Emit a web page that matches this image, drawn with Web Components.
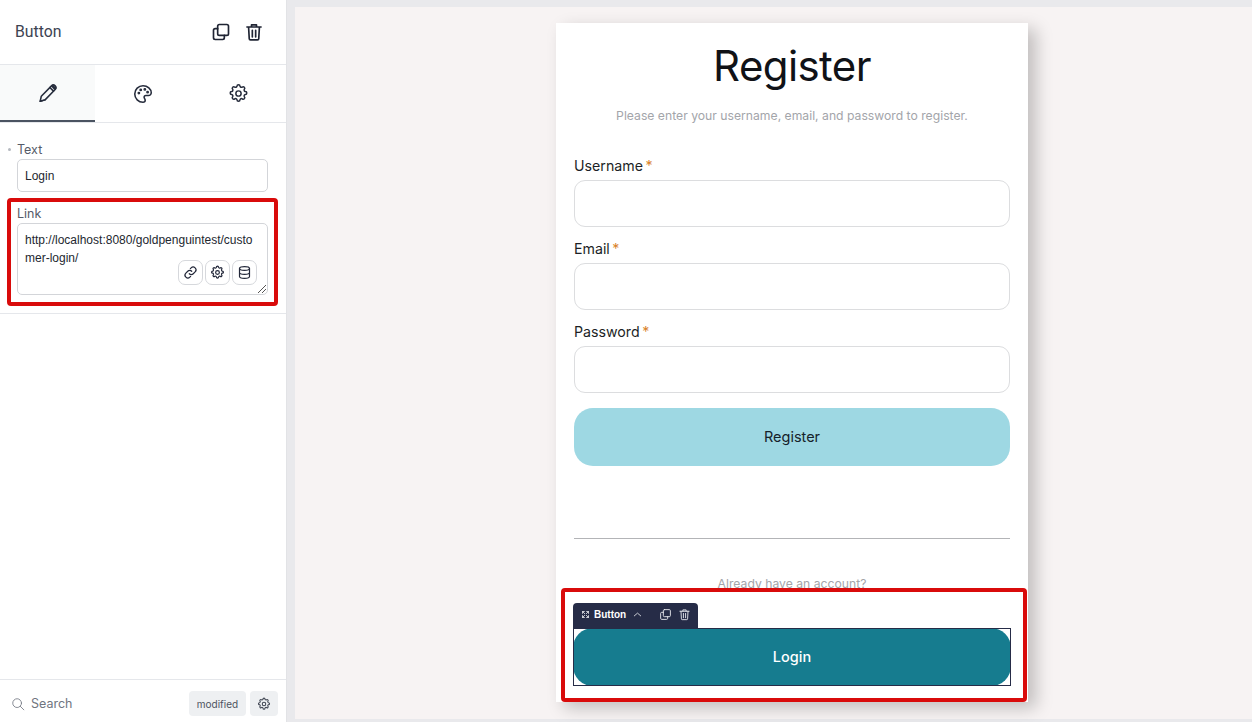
<!DOCTYPE html>
<html>
<head>
<meta charset="utf-8">
<style>
  html, body { margin: 0; height: 100%; overflow: hidden; }
  body { font-family: "Inter", "Liberation Sans", sans-serif; background: #fff; }
</style>
</head>
<body>
<builder-app></builder-app>

<script>
const ICONS = {
  copy: `<rect x="8" y="3" width="13" height="13" rx="2"/><path d="M8 8H5a2 2 0 0 0-2 2v9a2 2 0 0 0 2 2h9a2 2 0 0 0 2-2v-3"/>`,
  trash: `<path d="M3.500 6h17M9 6V3.500h6V6M5.500 6l.8 14a1.500 1.500 0 0 0 1.500 1.500h8.400a1.500 1.500 0 0 0 1.500-1.500l.8-14M10 10v8M14 10v8"/>`,
  pencil: `<path d="M3.500 21l1.200-5.500L15.800 4.200a2.800 2.800 0 0 1 4 4L8.800 19.500z"/><path d="M14 6l4 4M3.500 21l5.300-1.500"/><path d="M17 4.500l2.500 2.500" stroke-width="3"/>`,
  palette: `<path d="M12 3a9 9 0 0 0 0 18c1.600 0 2.400-1 2.400-2.200 0-1.500-1.200-2-1.200-3.200 0-1.100.9-1.900 2-1.900H18a3 3 0 0 0 3-3C21 6.500 17 3 12 3z"/><circle cx="7.500" cy="11" r=".7"/><circle cx="9.500" cy="7.500" r=".7"/><circle cx="14" cy="7" r=".7"/><circle cx="17" cy="10" r=".7"/>`,
  gear: `<circle cx="12" cy="12" r="3"/><path d="M10.300 3.600a1.700 1.700 0 0 1 3.400 0 1.700 1.700 0 0 0 2.600 1.100 1.700 1.700 0 0 1 2.400 2.400 1.700 1.700 0 0 0 1.100 2.600 1.700 1.700 0 0 1 0 3.400 1.700 1.700 0 0 0-1.100 2.600 1.700 1.700 0 0 1-2.400 2.400 1.700 1.700 0 0 0-2.600 1.100 1.700 1.700 0 0 1-3.400 0 1.700 1.700 0 0 0-2.600-1.100 1.700 1.700 0 0 1-2.400-2.400 1.700 1.700 0 0 0-1.100-2.600 1.700 1.700 0 0 1 0-3.400 1.700 1.700 0 0 0 1.100-2.600 1.700 1.700 0 0 1 2.400-2.400 1.700 1.700 0 0 0 2.600-1.100z"/>`,
  link: `<path d="M10 14a4.500 4.500 0 0 0 6.400 0l3-3A4.500 4.500 0 0 0 13 4.600l-1.200 1.200"/><path d="M14 10a4.500 4.500 0 0 0-6.400 0l-3 3a4.500 4.500 0 0 0 6.400 6.400l1.200-1.200"/>`,
  database: `<ellipse cx="12" cy="5.500" rx="8" ry="3"/><path d="M4 5.500v13c0 1.700 3.600 3 8 3s8-1.300 8-3v-13M4 12c0 1.700 3.600 3 8 3s8-1.300 8-3"/>`,
  search: `<circle cx="10.500" cy="10.500" r="7.500"/><path d="M16 16l6 6"/>`,
  chevron: `<path d="M5 15l7-6 7 6"/>`,
  expand: `<path d="M4 4l6 6M20 4l-6 6M4 20l6-6M20 20l-6-6M4 9V4h5M15 4h5v5M4 15v5h5M20 15v5h-5"/>`
};

class UiIcon extends HTMLElement {
  connectedCallback() {
    const size = this.getAttribute("size") || 20;
    const sw = this.getAttribute("stroke") || 2;
    this.attachShadow({ mode: "open" }).innerHTML = `
      <style>:host { display: inline-flex; color: inherit; } svg { display: block; }</style>
      <svg width="${size}" height="${size}" viewBox="0 0 24 24" fill="none" stroke="currentColor"
        stroke-width="${sw}" stroke-linecap="round" stroke-linejoin="round">${ICONS[this.getAttribute("name")]}</svg>`;
  }
}

class SideHeader extends HTMLElement {
  connectedCallback() {
    this.attachShadow({ mode: "open" }).innerHTML = `
      <style>
        :host { display: flex; align-items: center; height: 64px; padding: 0 22px 0 15px; border-bottom: 1px solid #e5e7eb; color: #1f2433; }
        h1 { flex: 1; margin: 0 0 2px; font: 400 15.800px "Roboto", sans-serif; color: #3d4352; }
        .actions { display: flex; gap: 13px; }
      </style>
      <h1>Button</h1>
      <div class="actions"><ui-icon name="copy" size="20"></ui-icon><ui-icon name="trash" size="20"></ui-icon></div>`;
  }
}

class SideTabs extends HTMLElement {
  connectedCallback() {
    this.attachShadow({ mode: "open" }).innerHTML = `
      <style>
        :host { display: grid; grid-template-columns: 95px 95px 96px; height: 57px; border-bottom: 1px solid #e5e7eb; color: #262c3c; }
        div { display: flex; align-items: center; justify-content: center; box-sizing: border-box; height: 57px; }
        .on { background: #f9fafa; border-bottom: 2px solid #4a5361; }
      </style>
      <div class="on"><ui-icon name="pencil" size="22" stroke="1.700"></ui-icon></div>
      <div><ui-icon name="palette" size="22" stroke="1.700"></ui-icon></div>
      <div><ui-icon name="gear" size="21" stroke="1.700"></ui-icon></div>`;
  }
}

class SideField extends HTMLElement {
  connectedCallback() {
    this.attachShadow({ mode: "open" }).innerHTML = `
      <style>
        :host { display: block; position: relative; padding-left: 17px; }
        label { display: block; font: 400 12.500px/15px "Inter", sans-serif; color: #555b68; margin-bottom: 2px; }
        .dot { position: absolute; left: 8px; top: 6px; width: 3px; height: 3px; border-radius: 50%; background: #b5b9c0; }
        .box { box-sizing: border-box; width: 251px; border: 1px solid #d3d5d9; border-radius: 5px; background: #fff;
               font: 12px/18px "Liberation Sans", sans-serif; color: #23272f; }
      </style>
      <span class="dot"></span>
      <label>${this.getAttribute("label")}</label>
      <div class="box"><slot></slot></div>`;
  }
}

class MiniButton extends HTMLElement {
  connectedCallback() {
    this.attachShadow({ mode: "open" }).innerHTML = `
      <style>
        :host { display: flex; align-items: center; justify-content: center; box-sizing: border-box; width: 25px; height: 25px;
                border: 1px solid #d6d8dc; border-radius: 7px; background: #fff; color: #23283a; }
      </style>
      <ui-icon name="${this.getAttribute("icon")}" size="15" stroke="1.900"></ui-icon>`;
  }
}

class LinkArea extends HTMLElement {
  connectedCallback() {
    this.attachShadow({ mode: "open" }).innerHTML = `
      <style>
        :host { display: block; position: relative; height: 70px; }
        .txt { padding: 7px 7px 0 7px; word-break: break-all; }
        .btns { position: absolute; right: 10px; bottom: 9px; display: flex; gap: 2px; }
        svg { position: absolute; right: 0; bottom: 0; }
      </style>
      <div class="txt">http://localhost:8080/goldpenguintest/customer-login/</div>
      <div class="btns">
        <mini-button icon="link"></mini-button><mini-button icon="gear"></mini-button><mini-button icon="database"></mini-button>
      </div>
      <svg width="10" height="10" viewBox="0 0 10 10" stroke="#555" fill="none"><path d="M1 9l8-8M5 9l4-4"/></svg>`;
  }
}

class SideFooter extends HTMLElement {
  connectedCallback() {
    this.attachShadow({ mode: "open" }).innerHTML = `
      <style>
        :host { display: flex; align-items: center; box-sizing: border-box; height: 43px; padding: 5px 8px 0 11px; border-top: 1px solid #e5e7eb; color: #777c86; }
        span { flex: 1; margin-left: 6px; font: 400 12.500px "Inter", sans-serif; color: #70757f; }
        b { display: flex; align-items: center; justify-content: center; height: 25px; border-radius: 4px; background: #eef0f2; font: 400 10px "Inter", sans-serif; color: #4d5360; }
        .mod { width: 57px; margin-right: 4px; }
        .cog { width: 28px; color: #3f4552; }
      </style>
      <ui-icon name="search" size="14" stroke="1.500"></ui-icon>
      <span>Search</span>
      <b class="mod">modified</b>
      <b class="cog"><ui-icon name="gear" size="14" stroke="1.800"></ui-icon></b>`;
  }
}

class SidePanel extends HTMLElement {
  connectedCallback() {
    this.attachShadow({ mode: "open" }).innerHTML = `
      <style>
        :host { display: flex; flex-direction: column; box-sizing: border-box; width: 287px; height: 722px; border-right: 1px solid #e2e3e6; background: #fff; position: relative; }
        .fields { display: flex; flex-direction: column; gap: 14px; padding: 19px 0 18px; border-bottom: 1px solid #e5e7eb; }
        .spacer { flex: 1; }
        .login { height: 31px; padding: 0 7px; display: flex; align-items: center; }
        .mark { position: absolute; left: 7px; top: 198px; width: 271px; height: 108px; box-sizing: border-box; border: 4px solid #d90b0b; border-radius: 4px; pointer-events: none; }
      </style>
      <side-header></side-header>
      <side-tabs></side-tabs>
      <div class="fields">
        <side-field label="Text"><div class="login">Login</div></side-field>
        <side-field label="Link"><link-area></link-area></side-field>
      </div>
      <div class="spacer"></div>
      <side-footer></side-footer>
      <div class="mark"></div>`;
  }
}

class FormField extends HTMLElement {
  connectedCallback() {
    this.attachShadow({ mode: "open" }).innerHTML = `
      <style>
        :host { display: block; }
        label { display: block; font: 400 14.200px/18px "Inter", sans-serif; color: #1c1f26; margin: 1px 0 5px; }
        i { font-style: normal; color: #d9822b; margin-left: -1.500px; }
        div { box-sizing: border-box; height: 47px; border: 1px solid #dcdddf; border-radius: 11px; background: #fff; }
      </style>
      <label>${this.getAttribute("label")} <i>*</i></label>
      <div></div>`;
  }
}

class ElementBar extends HTMLElement {
  connectedCallback() {
    this.attachShadow({ mode: "open" }).innerHTML = `
      <style>
        :host { position: absolute; left: 0; top: -25px; display: flex; align-items: center; box-sizing: border-box; width: 125px; height: 25px; padding: 0 8px 2px; border-radius: 4px 4px 0 0; background: #262c47; color: #e8e9ee; }
        b { font: 700 10px "Liberation Sans", sans-serif; color: #fff; margin: 0 0 0 4px; }
        .c { margin: 0 16px 0 6px; }
        .t { margin-left: 6px; }
      </style>
      <ui-icon name="expand" size="9" stroke="2.200"></ui-icon>
      <b>Button</b>
      <ui-icon class="c" name="chevron" size="11" stroke="1.800"></ui-icon>
      <ui-icon name="copy" size="13" stroke="1.700"></ui-icon>
      <ui-icon class="t" name="trash" size="13" stroke="1.700"></ui-icon>`;
  }
}

class RegisterCard extends HTMLElement {
  connectedCallback() {
    this.attachShadow({ mode: "open" }).innerHTML = `
      <style>
        :host { display: flex; flex-direction: column; box-sizing: border-box; width: 472px; height: 679px; padding: 0 18px; background: #fff; box-shadow: 8px 6px 16px rgba(0,0,0,.22); position: relative; }
        h2 { margin: 16px 0 0; font: 400 42px/54px "Inter", sans-serif; letter-spacing: -.6px; text-align: center; color: #101217; }
        p { margin: 0; text-align: center; color: #a3a5aa; font: 400 12.200px/16px "Inter", sans-serif; }
        .sub { margin: 15px 0 32px; }
        .fields { display: flex; flex-direction: column; gap: 12px; }
        .btn { display: flex; align-items: center; justify-content: center; height: 58px; border-radius: 19px; font: 400 14.500px "Inter", sans-serif; padding-bottom: 1px; box-sizing: border-box; }
        .reg { margin-top: 15px; background: #9ed8e3; color: #16222a; }
        hr { margin: 72px 0 0; border: 0; border-top: 1px solid #b3b4b7; }
        .have { margin-top: 37px; }
        .login-wrap { position: relative; margin: 36px -1px 0; outline: 1px solid #262c47; outline-offset: -1px; }
        .login { background: #167c8f; color: #fff; border-radius: 20px; font-weight: 500; }
      </style>
      <h2>Register</h2>
      <p class="sub">Please enter your username, email, and password to register.</p>
      <div class="fields">
        <form-field label="Username"></form-field>
        <form-field label="Email"></form-field>
        <form-field label="Password"></form-field>
      </div>
      <div class="btn reg">Register</div>
      <hr>
      <p class="have">Already have an account?</p>
      <div class="login-wrap">
        <element-bar></element-bar>
        <div class="btn login">Login</div>
      </div>`;
  }
}

class CanvasArea extends HTMLElement {
  connectedCallback() {
    this.attachShadow({ mode: "open" }).innerHTML = `
      <style>
        :host { display: block; flex: 1; box-sizing: border-box; height: 722px; padding: 7px 0 3px 8px; background: #e9e9ec; overflow: hidden; }
        .page { height: 100%; box-sizing: border-box; padding: 16px 0 0 261px; display: flex; background: #f7f3f3; position: relative; }
        .mark { position: absolute; left: 266px; top: 581px; width: 466px; height: 114px; box-sizing: border-box; border: 4px solid #d90b0b; border-radius: 4px; }
      </style>
      <div class="page">
        <register-card></register-card>
        <div class="mark"></div>
      </div>`;
  }
}

class BuilderApp extends HTMLElement {
  connectedCallback() {
    this.attachShadow({ mode: "open" }).innerHTML = `
      <style>:host { display: flex; width: 1252px; height: 722px; }</style>
      <side-panel></side-panel>
      <canvas-area></canvas-area>`;
  }
}

customElements.define("ui-icon", UiIcon);
customElements.define("side-header", SideHeader);
customElements.define("side-tabs", SideTabs);
customElements.define("side-field", SideField);
customElements.define("mini-button", MiniButton);
customElements.define("link-area", LinkArea);
customElements.define("side-footer", SideFooter);
customElements.define("side-panel", SidePanel);
customElements.define("form-field", FormField);
customElements.define("element-bar", ElementBar);
customElements.define("register-card", RegisterCard);
customElements.define("canvas-area", CanvasArea);
customElements.define("builder-app", BuilderApp);
</script>
</body>
</html>
